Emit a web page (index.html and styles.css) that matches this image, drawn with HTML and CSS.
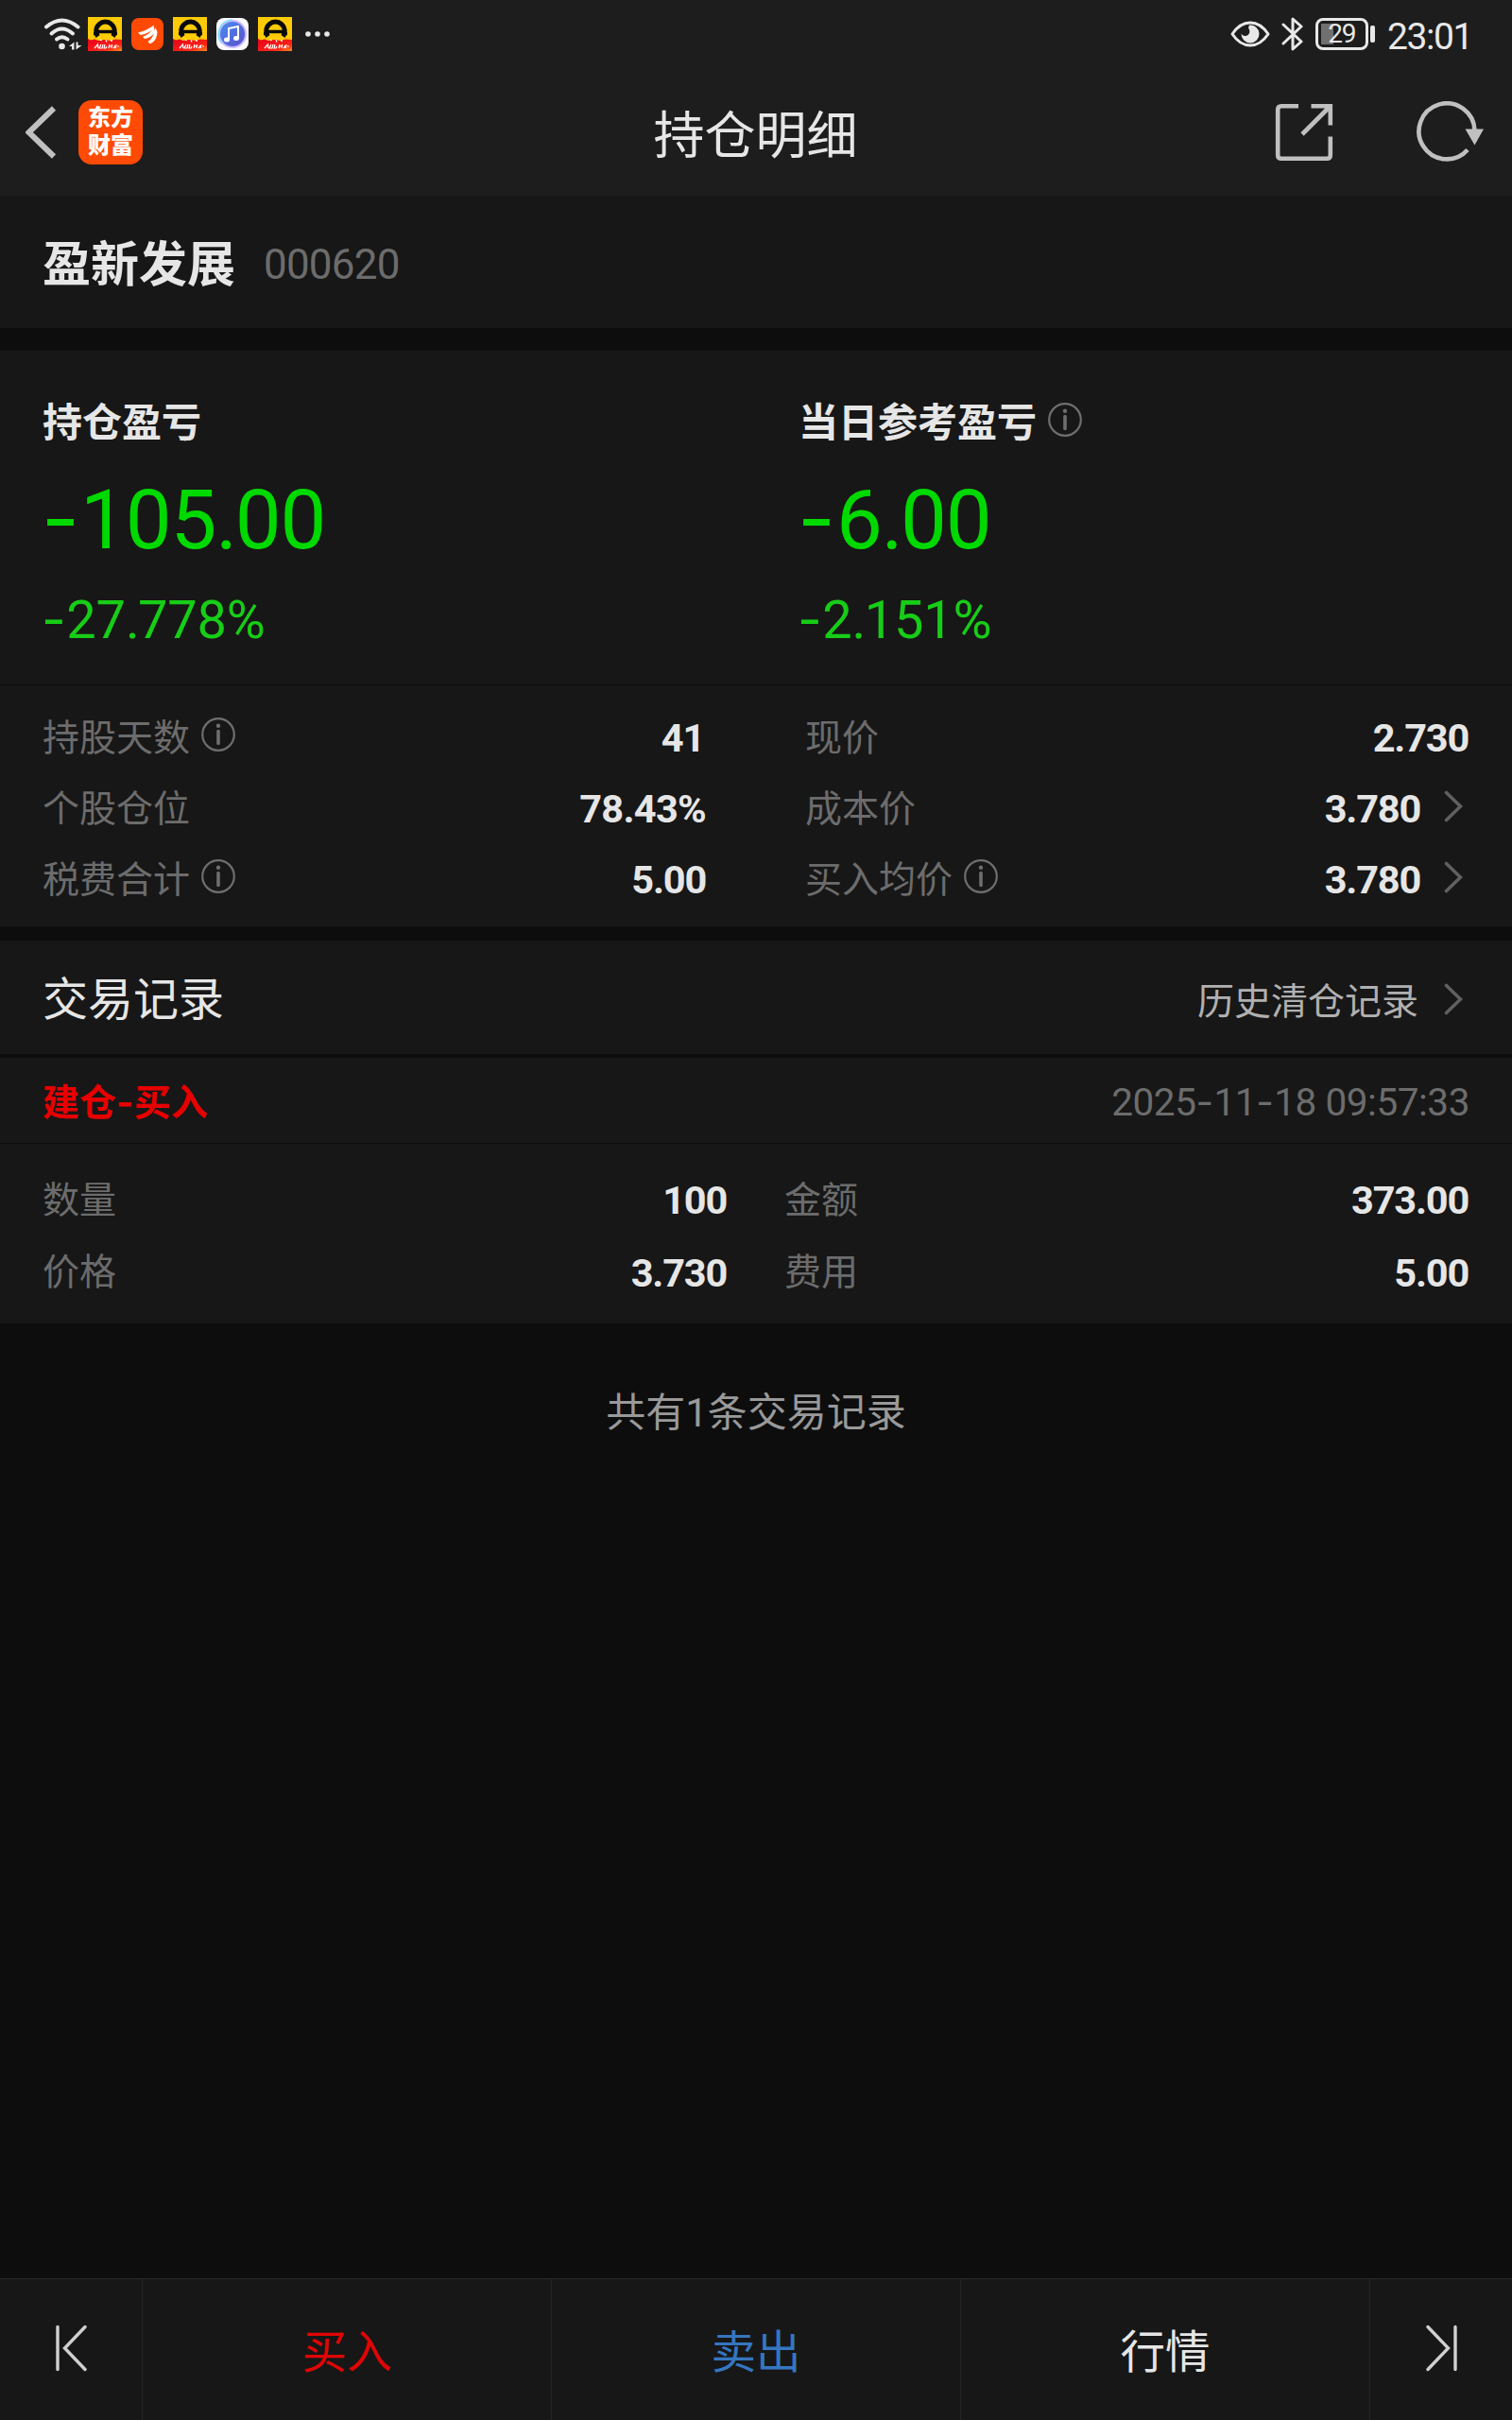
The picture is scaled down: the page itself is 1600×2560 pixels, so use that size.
FILE: index.html
```html
<!DOCTYPE html>
<html lang="zh-CN">
<head>
<meta charset="utf-8">
<title>持仓明细</title>
<link rel="stylesheet" href="styles.css">
</head>
<body>
<svg class="defs" width="0" height="0" aria-hidden="true">
  <defs>
    <linearGradient id="promo" x1="0" x2="1" y1="0" y2="1"><stop offset="0" stop-color="#e5001c"/><stop offset=".7" stop-color="#fb2415"/><stop offset="1" stop-color="#ff8a1c"/></linearGradient>
    <linearGradient id="tune" x1="0" x2="1" y1="0" y2="1"><stop offset="0" stop-color="#4a8df0"/><stop offset="1" stop-color="#5a50cc"/></linearGradient>
    <symbol id="ride" viewBox="0 0 36 36">
      <rect width="36" height="36" fill="#ffcb05"/>
      <path d="M10.500 20.500a9.800 9.800 0 1 1 16 0" fill="none" stroke="#0a0a0a" stroke-width="5"/>
      <path d="M6 17.500h6M25 17.500h6M11 15.500h15" stroke="#0a0a0a" stroke-width="3.500"/>
      <path d="M0 23l3 1.500 4-1 4 1.500 6-1 7 1 5-1.500 7 .5V36H0z" fill="url(#promo)"/>
      <path d="M19 24.500l1 2M24 25h2M13 24l1.500 1" stroke="#fff" stroke-width="1.300"/>
      <path d="M7 33l3.500-4 .5 4M14 29l-2 4h3l1-4M18 29l-1 4h2l1-2M22 33l1-4M23 31h3M25.500 29l-.5 4M28 30l2 3M30.500 29.500L27 33M31 31h2" fill="none" stroke="#fff" stroke-width="1.200"/>
    </symbol>
    <symbol id="info" viewBox="0 0 36 36">
      <circle cx="18" cy="18" r="16.800" fill="none" stroke="currentColor" stroke-width="2.200"/>
      <circle cx="18" cy="8.800" r="2.200" fill="currentColor"/>
      <path d="M18 14.500v13" stroke="currentColor" stroke-width="3.600" stroke-linecap="round"/>
    </symbol>
    <symbol id="more" viewBox="0 0 20 34">
      <path d="M2.500 2.500L17.500 17 2.500 31.500" fill="none" stroke="currentColor" stroke-width="3.600" stroke-linecap="round"/>
    </symbol>
  </defs>
</svg>

<div class="screen">
  <header class="header">
    <div class="status">
      <div class="status-left">
        <svg class="wifi" viewBox="0 0 42 36">
          <g fill="none" stroke="#e8e8e8" stroke-width="4" stroke-linecap="round">
            <path d="M3 10.500Q19.500-3.500 36.500 10.500"/><path d="M8.500 17.500Q19.500 7.500 31 17.500"/><path d="M14 23.500Q19.500 19 25.500 23.500"/>
          </g>
          <circle cx="19.500" cy="31" r="3.300" fill="#e8e8e8"/>
          <path d="M32.500 26.500v8h-2.500v-3.500h-3zM34.500 34.500v-8h2v3.500h4z" fill="#e8e8e8"/>
        </svg>
        <svg class="app" viewBox="0 0 36 36"><use href="#ride"/></svg>
        <svg class="app small" viewBox="0 0 34 34">
          <rect width="34" height="34" rx="8" fill="#ff4a05"/>
          <path d="M7 15.500Q16 13.500 24 7.500L23 12Q17 17 9.500 18zM12 20Q20 17 24 9.500L25 15Q21 21 14 22zM17.500 25Q24 21 25.500 10L27.500 15Q27 24 20 27.500z" fill="#fff"/>
        </svg>
        <svg class="app" viewBox="0 0 36 36"><use href="#ride"/></svg>
        <svg class="app small" viewBox="0 0 34 34">
          <rect width="34" height="34" rx="8" fill="#fafaff"/>
          <circle cx="17" cy="17" r="15" fill="#c9b7ff"/><path d="M6 27A15 15 0 0 1 17 2" fill="none" stroke="#7fe0f5" stroke-width="1.500"/>
          <circle cx="17" cy="17" r="13" fill="url(#tune)"/>
          <path d="M13 23V11l10-2v12" fill="none" stroke="#fff" stroke-width="2"/><ellipse cx="11" cy="23" rx="3" ry="2.500" fill="#fff"/><ellipse cx="21" cy="21.500" rx="3" ry="2.500" fill="#fff"/>
        </svg>
        <svg class="app" viewBox="0 0 36 36"><use href="#ride"/></svg>
        <svg class="dots" viewBox="0 0 28 8" fill="#e8e8e8"><circle cx="4" cy="4" r="2.800"/><circle cx="14" cy="4" r="2.800"/><circle cx="24" cy="4" r="2.800"/></svg>
      </div>
      <div class="status-right">
        <svg class="eye" viewBox="0 0 42 28">
          <path d="M2 14Q10 2 21 2t19 12Q32 26 21 26T2 14z" fill="none" stroke="#e8e8e8" stroke-width="3" stroke-linejoin="round"/>
          <path d="M20 4.500a9.500 9.500 0 1 1-8.500 9q1.500 3 5 2.500c4-1 5-5 2.500-8.500z" fill="#e8e8e8"/>
        </svg>
        <svg class="bt" viewBox="0 0 24 36"><path d="M2 8l19 18-9 8V2l9 8L2 28" fill="none" stroke="#e8e8e8" stroke-width="3" stroke-linejoin="round" stroke-linecap="round"/></svg>
        <div class="battery"><span class="battery-text">29</span></div>
        <div class="battery-nub"></div>
        <div class="clock">23:01</div>
      </div>
    </div>
    <nav class="nav">
      <div class="nav-side">
        <svg class="back" viewBox="0 0 34 56"><path d="M30 2.500L3.500 28 30 53.500" fill="none" stroke="#c0c0c0" stroke-width="6"/></svg>
        <div class="logo">东方<br>财富</div>
      </div>
      <h1 class="nav-title">持仓明细</h1>
      <div class="nav-side nav-actions">
        <svg class="share" viewBox="0 0 62 62" fill="none" stroke="#c0c0c0" stroke-width="4.600">
          <path d="M25 3.200H7Q3.200 3.200 3.200 7V55Q3.200 58.800 7 58.800H55Q58.800 58.800 58.800 55V35.500"/><path d="M38.500 3.200H58.800V23.500M58 4L29 33"/>
        </svg>
        <svg class="refresh" viewBox="0 0 72 66">
          <path d="M61.500 31A29.500 29.500 0 1 0 54 51.500" fill="none" stroke="#c0c0c0" stroke-width="4.600"/><path d="M51.500 29.500h19.500L61.500 46.500z" fill="#c0c0c0"/>
        </svg>
      </div>
    </nav>
  </header>

  <section class="stock panel"><span class="stock-name">盈新发展</span><span class="stock-code">000620</span></section>

  <section class="summary panel">
    <div class="pnl">
      <div class="pnl-title">持仓盈亏</div>
      <div class="pnl-amount"><span class="sign">-</span>105<span class="dot">.</span>00</div>
      <div class="pnl-rate"><span class="sign">-</span>27<span class="dot">.</span>778%</div>
    </div>
    <div class="pnl">
      <div class="pnl-title">当日参考盈亏<svg class="info"><use href="#info"/></svg></div>
      <div class="pnl-amount"><span class="sign">-</span>6<span class="dot">.</span>00</div>
      <div class="pnl-rate"><span class="sign">-</span>2<span class="dot">.</span>151%</div>
    </div>
  </section>

  <section class="holding panel">
    <div class="col">
      <div class="row"><span class="label">持股天数</span><svg class="info"><use href="#info"/></svg><b class="value inset">41</b></div>
      <div class="row"><span class="label">个股仓位</span><b class="value percent">78.43%</b></div>
      <div class="row"><span class="label">税费合计</span><svg class="info"><use href="#info"/></svg><b class="value">5.00</b></div>
    </div>
    <div class="col">
      <div class="row"><span class="label">现价</span><b class="value">2.730</b></div>
      <div class="row"><span class="label">成本价</span><b class="value">3.780</b><svg class="more"><use href="#more"/></svg></div>
      <div class="row"><span class="label">买入均价</span><svg class="info"><use href="#info"/></svg><b class="value">3.780</b><svg class="more"><use href="#more"/></svg></div>
    </div>
  </section>

  <section class="records-head panel">
    <h2 class="records-title">交易记录</h2>
    <span class="history">历史清仓记录</span><svg class="more"><use href="#more"/></svg>
  </section>

  <section class="record-head panel">
    <span class="record-type">建仓<span class="sign">-</span>买入</span>
    <time class="record-time">2025<span class="sign">-</span>11<span class="sign">-</span>18 09:57:33</time>
  </section>
  <section class="record panel">
    <div class="col">
      <div class="row"><span class="label">数量</span><b class="value">100</b></div>
      <div class="row"><span class="label">价格</span><b class="value">3.730</b></div>
    </div>
    <div class="col">
      <div class="row"><span class="label">金额</span><b class="value">373.00</b></div>
      <div class="row"><span class="label">费用</span><b class="value">5.00</b></div>
    </div>
  </section>

  <p class="total">共有1条交易记录</p>

  <footer class="toolbar">
    <div class="tool"><svg class="step" viewBox="0 0 34 50" fill="none" stroke="#d0d0d0" stroke-width="3.400" stroke-linecap="round"><path d="M3 2.500v45M32 2.500L10.500 25 32 47.500"/></svg></div>
    <div class="tool buy">买入</div>
    <div class="tool sell">卖出</div>
    <div class="tool quote">行情</div>
    <div class="tool"><svg class="step" viewBox="0 0 34 50" fill="none" stroke="#d0d0d0" stroke-width="3.400" stroke-linecap="round"><path d="M32 2.500v45M3 2.500L24.500 25 3 47.500"/></svg></div>
  </footer>
</div>
</body>
</html>
```
FILE: styles.css
```css
* { box-sizing: border-box; margin: 0; padding: 0; }
body { background: #0d0d0d; }
.defs { position: absolute; }
svg { display: block; flex: none; }

.screen {
  width: 1600px;
  height: 2560px;
  display: flex;
  flex-direction: column;
  background: #0d0d0d;
  color: #e6e6e6;
  font-family: Roboto, "Noto Sans CJK SC", sans-serif;
  line-height: 1.2;
  white-space: nowrap;
}
.panel { background: #171717; flex: none; }

/* status bar and navigation */
.header { height: 207px; background: #1d1d1d; flex: none; }
.status { height: 72px; display: flex; justify-content: space-between; padding: 0 43px 0 46px; }
.status-left, .status-right { display: flex; align-items: center; }
.wifi { width: 42px; height: 36px; margin-right: 5px; }
.app { width: 36px; height: 36px; margin-right: 10px; }
.app.small { width: 34px; height: 34px; }
.dots { width: 28px; height: 8px; margin-left: 3px; }
.eye { width: 42px; height: 28px; margin-right: 12px; }
.bt { width: 24px; height: 36px; margin-right: 12px; }
.battery {
  width: 56px;
  height: 34px;
  border: 3px solid #e8e8e8;
  border-radius: 8px;
  display: flex;
  align-items: center;
  justify-content: center;
  background: linear-gradient(#707070, #707070) 3px 3px / 13px 22px no-repeat;
}
.battery-text { font-size: 28px; letter-spacing: -1px; color: #e8e8e8; }
.battery-nub { width: 5px; height: 18px; border-radius: 2px; background: #e8e8e8; margin: 0 13px 0 2px; }
.clock { font-size: 39px; letter-spacing: -1.4px; padding-top: 6px; margin-right: -1px; color: #e8e8e8; }

.nav { height: 135px; display: flex; align-items: center; }
.nav-side { width: 500px; display: flex; align-items: center; }
.back { width: 34px; height: 56px; margin-left: 27px; }
.logo {
  width: 68px;
  height: 68px;
  margin-left: 22px;
  padding: 5px 10px;
  border-radius: 14px;
  background: #ff4a05;
  color: #fff;
  font-size: 24px;
  font-weight: 900;
  line-height: 29px;
}
.nav-title { flex: 1; text-align: center; font-size: 54px; font-weight: 400; padding: 11px 1px 0 0; }
.nav-actions { justify-content: flex-end; }
.share { width: 62px; height: 62px; margin-right: 88px; }
.refresh { width: 72px; height: 66px; margin-right: 29px; }

/* stock name */
.stock { height: 140px; display: flex; align-items: center; padding: 7px 45px 0; }
.stock-name { font-size: 51px; font-weight: 700; padding-top: 1px; }
.stock-code { font-size: 44px; letter-spacing: -.8px; color: #6c6c6c; margin-left: 30px; }

/* profit and loss */
.summary { margin-top: 24px; height: 353px; display: flex; padding: 47px 0 0 45px; }
.pnl { width: 800px; flex: none; }
.pnl + .pnl { width: 700px; }
.pnl-title { height: 60px; display: flex; align-items: center; font-size: 42px; font-weight: 700; }
.pnl-title .info { margin: -8px 0 0 12px; }
.pnl-amount { height: 110px; line-height: 110px; margin-top: 16px; font-size: 87px; letter-spacing: -1.1px; text-indent: -1px; color: #00d900; }
.pnl-rate { height: 70px; line-height: 70px; margin-top: 16px; font-size: 56px; letter-spacing: -.2px; text-indent: -1px; color: #17cd17; }
.sign { font-family: Inter, sans-serif; letter-spacing: .01em; }
.dot { letter-spacing: -.03em; }
.info { width: 36px; height: 36px; color: #6e6e6e; }
.more { width: 20px; height: 34px; color: #606060; }

/* label / value rows */
.holding { margin-top: 1px; height: 255px; padding: 19px 45px 0; display: flex; justify-content: space-between; }
.holding .col { width: 703px; }
.row { height: 75px; display: flex; align-items: center; }
.label { font-size: 39px; color: #6c6c6c; }
.row .info { margin: -9px 0 0 12px; }
.value { margin-left: auto; padding-right: 1px; font-size: 41.5px; font-weight: 700; letter-spacing: -1.2px; }
.holding .value { margin-top: -2px; }
.row .more { margin: -8px 7px 0 24px; }
.value.inset { padding-right: 3px; }
.value.percent { letter-spacing: -.7px; }

/* trade records */
.records-head { margin-top: 15px; height: 120px; display: flex; align-items: center; padding: 6px 45px 0; }
.records-title { flex: 1; font-size: 48px; font-weight: 400; }
.history { font-size: 39px; color: #b0b0b0; padding-top: 5px; }
.records-head .more { margin: -2px 7px 0 27px; }
.record-head { margin-top: 4px; height: 90px; display: flex; align-items: center; justify-content: space-between; padding: 5px 45px 0; }
.record-type { font-size: 39px; font-weight: 700; color: #e60000; }
.record-time { font-size: 40.5px; letter-spacing: -.45px; color: #6c6c6c; }
.record { margin-top: 1px; height: 190px; display: flex; justify-content: space-between; padding: 22px 45px 0; }
.record .row { height: 76.5px; }
.record .col { width: 725px; }
.total { flex: 1; padding-top: 70px; text-align: center; font-size: 42px; color: #999; }

/* bottom toolbar */
.toolbar { flex: none; height: 150px; display: grid; grid-template-columns: 151px 433px 433px 433px 150px; background: #171717; border-top: 1px solid #2b2b2b; }
.tool { display: flex; align-items: center; justify-content: center; font-size: 47.5px; padding-top: 7px; border-right: 1px solid #242424; }
.tool:last-child { border-right: 0; }
.step { width: 34px; height: 50px; margin-top: -10px; }
.buy { color: #e00505; }
.sell { color: #3576c0; }
```
